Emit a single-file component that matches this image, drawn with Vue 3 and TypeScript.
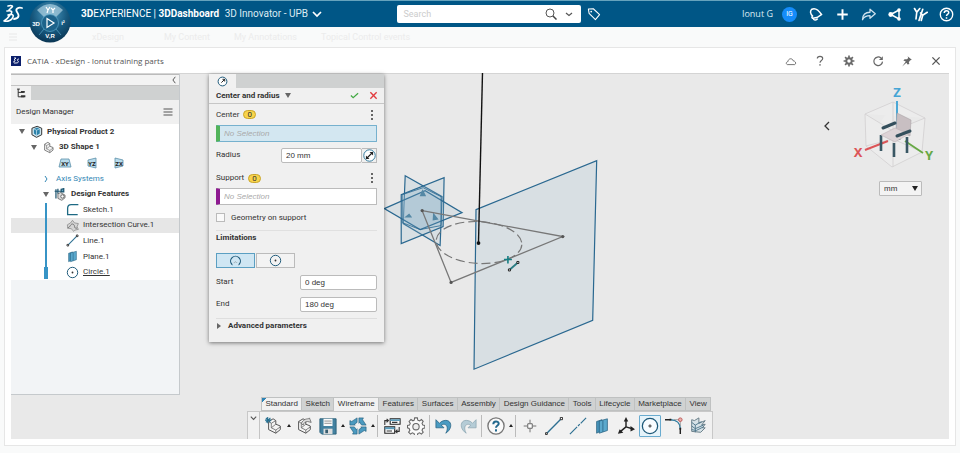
<script setup lang="ts">
import { ref } from 'vue'

interface TreeItem {
  label: string
  icon: string
  selected?: boolean
  active?: boolean
}

const shape = '<path d="M4 5l5-3 3 2v4l5 2v4l-5 4-8-4z" fill="#f4f4f4" stroke="#555" stroke-width="1.1"/><path d="M4 5l3 2v5l5 2.500 5-3.500M12 4L7 7M12 18v-3.500M12 8l-5 4" fill="none" stroke="#666" stroke-width=".9"/>'
const circle = '<circle cx="10" cy="10" r="8" fill="none" stroke="#1d5878" stroke-width="1.500"/><circle cx="10" cy="10" r="1.400" fill="#333"/>'
const line = '<path d="M3 17L17 3" stroke="#2d6f91" stroke-width="1.600"/><path d="M1.500 16h2.500v2.500H1.500zM16 1.500h2.500V4H16z" fill="#fff" stroke="#222" stroke-width="1.200"/>'
const plane = '<path d="M4 5l6-2v12l-6 3z" fill="#4794ba" stroke="#235e7d" stroke-width=".8"/><path d="M7 4.500L16 2v13l-9 3z" fill="#5ba9cd" stroke="#235e7d" stroke-width=".8"/><path d="M11 4v12.500" stroke="#235e7d" stroke-width=".8"/>'

const icons: Record<string, string> = {
  bell: '<path d="M5 3c4-2 9 1 13 7l-6 4-6 1c-1-1-1-2 0-3C3 9 2.500 5.500 5 3zM7 16c2 2 4 2 6-.5" fill="none" stroke="#fff" stroke-width="2"/>',
  plus: '<path d="M10 3v14M3 10h14" stroke="#fff" stroke-width="2.600"/>',
  share: '<path d="M12 3l7 6-7 6v-3.500c-5 0-8 1.500-10 5.500 0-7 4-10 10-10z" fill="none" stroke="#cfe2ee" stroke-width="1.700" stroke-linejoin="round"/>',
  network: '<path d="M16 4L5 10l11 6V4" fill="none" stroke="#fff" stroke-width="2"/><circle cx="5" cy="10" r="3.200" fill="#fff"/><circle cx="16" cy="4" r="2.400" fill="#fff"/><circle cx="16" cy="16" r="2.400" fill="#fff"/>',
  people: '<path d="M2 2l3 5 4-5M5 7l-1 9M13 3L8 18M10 8l3 3 6-4M13 11l-2 7" fill="none" stroke="#fff" stroke-width="2.200" stroke-linecap="round"/>',
  help: '<circle cx="10" cy="10" r="8.300" fill="none" stroke="#fff" stroke-width="1.800"/><path d="M7 8c0-4 6-4 6-.5 0 2-3 2-3 4.500M10 13.500v2" fill="none" stroke="#fff" stroke-width="2"/>',
  tag: '<path d="M2 3l7-.5 9 8.500-6 7-9-9z" fill="none" stroke="#fff" stroke-width="1.500" stroke-linejoin="round"/><circle cx="6" cy="6.500" r="1.300" fill="#fff"/>',
  cloud: '<path d="M4 16c-3-1-2-5 1-5 0-5 7-7 9-1 4 0 5 5 2 6z" fill="none" stroke="#666" stroke-width="1.500"/>',
  question: '<path d="M5.500 6c0-5 9-5 9 0 0 3.500-4.500 3-4.500 7M10 15v3" fill="none" stroke="#666" stroke-width="1.900"/>',
  gear: '<circle cx="10" cy="10" r="4.500" fill="none" stroke="#6a6a6a" stroke-width="3.200"/><path d="M10 1v4M10 15v4M1 10h4M15 10h4M3.500 3.500l3 3M13.500 13.500l3 3M3.500 16.500l3-3M13.500 6.500l3-3" stroke="#6a6a6a" stroke-width="2.800"/>',
  refresh: '<path d="M15 5A7.200 7.200 0 1 0 17.500 11" fill="none" stroke="#666" stroke-width="2"/><path d="M18 2v6.500h-6.500z" fill="#666"/>',
  pin: '<path d="M11 2l7 6-3 1-2 3 1 3-3 1-2-3-7 6 6-8-4-2 2-2h4l2-2z" fill="#666"/>',
  close: '<path d="M4 4l12 12M16 4L4 16" stroke="#555" stroke-width="2.200"/>',
  hierarchy: '<path d="M2 2h5M4 2v14h11M4 8h10" fill="none" stroke="#333" stroke-width="1.800"/><path d="M9 7h7M9 15h8" stroke="#333" stroke-width="3.400"/>',
  menu: '<path d="M1 4h18M1 10h18M1 16h18" stroke="#555" stroke-width="2"/>',
  product: '<path d="M3 5l8-3 7 3v10l-8 4-7-4z" fill="#cfe6f0" stroke="#222" stroke-width="1.400"/><path d="M6 6l5-2 4 2v7l-5 3-4-3z" fill="#2c82aa"/><path d="M6 6l4 2 5-2M10 8v8" stroke="#d6edf7" fill="none"/>',
  shape,
  features: '<path d="M3 2v14M1 5h12M6 1v8M11 2l4-1v5h-4z" fill="#71b7d6" stroke="#1d546e" stroke-width="1.900"/><path d="M6 9l4-2 7 4v4l-5 4-6-3z" fill="#ddd" stroke="#444"/><circle cx="13" cy="13" r="2.600" fill="#fff" stroke="#555" stroke-width="1.300"/>',
  sketch: '<path d="M19 2.500H8C4 2.500 2.500 5 2.500 8v10H18" fill="none" stroke="#1e6a84" stroke-width="2"/>',
  curve: '<path d="M2 9l5-3 3-4 3 4 6 1-2 5 2 4-5 1-2 2-4-4-5-1z" fill="#d4d4d4" stroke="#8a8a8a" stroke-width="1.200"/><path d="M2 14c5-1 5-8 9-6s0 7 6 6" fill="none" stroke="#666" stroke-width="1.300"/>',
  line,
  plane,
  circle,
  radius: '<circle cx="10" cy="10" r="8" fill="#fff" stroke="#1d5878" stroke-width="1.800"/><path d="M8 12l6-6M10 6h4v4" stroke="#222" stroke-width="1.800" fill="none"/>',
  diameter: '<circle cx="10" cy="10" r="8.800" fill="#fff" stroke="#2d789b" stroke-width="1.500"/><path d="M5 15L15 5" stroke="#222" stroke-width="1.700"/><path d="M10 4.500h5.500V10zM4.500 10v5.500H10z" fill="#222"/>',
  check: '<path d="M2 10l5 5L18 5" fill="none" stroke="#42a943" stroke-width="2.700"/>',
  cross: '<path d="M3 3l14 14M17 3L3 17" stroke="#e23c3f" stroke-width="3"/>',
  arc: '<path d="M4.500 16A7.500 7.500 0 1 1 15.500 16" fill="none" stroke="#1d5878" stroke-width="1.800"/><path d="M3 15l3 2M17 15l-3 2" stroke="#1d5878"/><path d="M8 14a2 2 0 0 1 4 0" fill="none" stroke="#555" stroke-dasharray="1 1"/>',
  newshape: shape + '<path d="M3 0v7M0 3.500h7M1 1l5 5M6 1L1 6" stroke="#246f91" stroke-width="1.200"/>',
  openshape: shape + '<path d="M7 7c2-4 5-5 8-5l1-1 2 5-4-1c-2 0-4 1-5 4z" fill="#ddd" stroke="#555" stroke-width=".8"/>',
  save: '<path d="M1 2h18v17H3l-2-2z" fill="#4381a0" stroke="#285d77"/><path d="M5 2h10v8H5z" fill="#fafafa"/><path d="M6 4.500h8M6 7h8" stroke="#888"/><path d="M5 13h10v6H5z" fill="#ddd"/><path d="M7 14h3v4H7z" fill="#375d70"/>',
  sync: '<g fill="#4b9ac0" stroke="#235e7d" stroke-width=".7"><path d="M1 9V4l2 1 6-4v5L6 8l1 1z"/><path d="M11 1h5l-1 2 4 6h-5l-2-3-1 1z"/><path d="M19 11v5l-2-1-6 4v-5l3-2-1-1z"/><path d="M9 19H4l1-2-4-6h5l2 3 1-1z"/></g>',
  swap: '<path d="M8 2h11v6H8zM2 11h11v7H2z" fill="#fff" stroke="#222" stroke-width="1.200"/><path d="M8 3.500h11M2 12.500h11" stroke="#5b9cbb" stroke-width="2"/><path d="M10 6h6M4 15.500h6M2 9V4h4M4 2l2 2-2 2M18 11v5h-4M16 14l-2 2 2 2" fill="none" stroke="#333" stroke-width="1.200"/>',
  cog: '<path d="M8.500 1h3l.5 2.500 2 .8 2-1.500 2 2-1.300 2.200.9 2 2.200.4v2.800l-2.200.6-.9 2 1.300 2-2 2.200-2-1.400-2 .8-.5 2.600h-3l-.6-2.600-2-.8-2 1.400-2.100-2.200 1.400-2-.8-2L.5 12V9.400l2.300-.4.8-2-1.300-2 2.100-2.200 2.200 1.400 1.400-.7z" fill="#fafafa" stroke="#666" stroke-width="1.200"/><circle cx="10" cy="10.800" r="3.500" fill="#eee" stroke="#666" stroke-width="1.200"/>',
  undo: '<path d="M1 3v9h9L7 9c5-3 9 2 5 9 9-6 6-16-2-14-3 .7-4 2-5 3z" fill="#4a9bc2" stroke="#235e7d" stroke-width=".8"/>',
  redo: '<path d="M19 3v9h-9l3-3C8 6 4 11 8 18-1 12 2 2 10 4c3 .7 4 2 5 3z" fill="#b5ccd6" stroke="#8aa4b0" stroke-width=".8"/>',
  assist: '<circle cx="10" cy="10" r="9" fill="#fafafa" stroke="#777" stroke-width="1.500"/><path d="M7 8c0-4 6-4 6-.5 0 2-3 2-3 4.500M10 13.500V16" fill="none" stroke="#22688e" stroke-width="2.200"/>',
  point: '<path d="M3 10h4M13 10h4M10 3v4M10 13v4" stroke="#666"/><path d="M7.500 7.500h5v5h-5z" fill="#fff" stroke="#555"/>',
  bigline: '<path d="M1.500 18.500L18 2" stroke="#2d6f91" stroke-width="1.500"/><path d="M.5 17.500h2v2h-2zM17 .5h2.500V3H17z" fill="#fff" stroke="#222"/>',
  axisline: '<path d="M1 19l8-8M10 10l2-2M13 7l6-6" stroke="#2d6f91" stroke-width="1.300"/>',
  axes: '<path d="M10 11V3M10 11l7 2M10 11l-6 5" stroke="#222" stroke-width="1.600"/><path d="M10 0L7.500 5h5zM20 13.500l-5-3.500v6zM1 18.500l2-5 4 4z" fill="#222"/>',
  circletool: '<circle cx="10" cy="10" r="8.500" fill="#f8fcff" stroke="#1d5878" stroke-width="1.400"/><path d="M9 9h2v2H9z" fill="#fff" stroke="#333"/>',
  corner: '<path d="M0 3h6M17 13v6" stroke="#222" stroke-width="1.600"/><path d="M6 3c7 0 11 4 11 10" stroke="#2c7a9f" stroke-width="1.500" fill="none"/><path d="M10 3h7v7" stroke="#999" fill="none"/><path d="M5 2h2v2H5zM16 12h2v2h-2z" fill="#222"/><circle cx="17" cy="3" r="2" fill="#eeb1aa" stroke="#b55"/>',
  surface: '<path d="M3 3l3 1 5-3v6l7-3-4 5 4-1-3 4h3l-5 5-10-1z" fill="#d7e2e7" stroke="#607681"/><path d="M3 6l4 3 7-4M3 10l4 3 9-4M3 14l5 1 8-4M7 9v8" fill="none" stroke="#487388"/>',
}

const headerTools = ['bell', 'plus', 'share', 'network', 'people', 'help']
const windowTools = ['cloud', 'question', 'gear', 'refresh', 'pin', 'close']
const dashboardTabs = ['xDesign', 'My Content', 'My Annotations', 'Topical Control events']

const tree: TreeItem[] = [
  { label: 'Sketch.1', icon: 'sketch' },
  { label: 'Intersection Curve.1', icon: 'curve', selected: true },
  { label: 'Line.1', icon: 'line' },
  { label: 'Plane.1', icon: 'plane' },
  { label: 'Circle.1', icon: 'circle', active: true },
]

const sections = ['Standard', 'Sketch', 'Wireframe', 'Features', 'Surfaces', 'Assembly', 'Design Guidance', 'Tools', 'Lifecycle', 'Marketplace', 'View']
const section = ref('Wireframe')

const tools = [
  { icon: 'newshape', menu: true },
  { icon: 'openshape' },
  { icon: 'save', menu: true },
  { icon: 'sync', menu: true, end: true },
  { icon: 'swap' },
  { icon: 'cog', end: true },
  { icon: 'undo' },
  { icon: 'redo', end: true },
  { icon: 'assist', menu: true, end: true },
  { icon: 'point' },
  { icon: 'bigline' },
  { icon: 'axisline' },
  { icon: 'plane' },
  { icon: 'axes' },
  { icon: 'circletool', on: true },
  { icon: 'corner' },
  { icon: 'surface' },
]

const radius = ref('20 mm')
const start = ref('0 deg')
const end = ref('180 deg')
const onSupport = ref(false)
const mode = ref('arc')
const unit = ref('mm')
</script>

<template>
  <div class="page">
    <header class="topbar">
      <div class="brand">
        <svg class="ds" viewBox="0 0 20 20" aria-label="3DS">
          <path d="M5 2c4-1 6 0 3 2L6 6M4 7c5-1 6 1 3 4-2 3-4 5-6 6 4 1 8-1 9-4s-2-3-5-2" fill="none" stroke="#fff" stroke-width="1.600" stroke-linecap="round" stroke-linejoin="round" />
          <path d="M19 4c-4-1-7 1-5 4s3 6-3 7" fill="none" stroke="#fff" stroke-width="1.800" stroke-linecap="round" />
        </svg>
        <button class="compass" aria-label="Compass">
          <svg viewBox="0 0 42 42">
            <defs>
              <radialGradient id="ball" cx=".5" cy=".3" r=".7">
                <stop offset="0" stop-color="#4e9cc3" /><stop offset=".6" stop-color="#16587e" /><stop offset="1" stop-color="#0b3654" />
              </radialGradient>
            </defs>
            <circle cx="21" cy="21" r="20.500" fill="url(#ball)" />
            <path d="M8 9Q21-3 34 9L27 16Q21 11 15 16z" fill="#a7cbdc" opacity=".75" />
            <circle cx="21" cy="22" r="8.500" fill="#1d638b" stroke="#5ba6c9" stroke-width=".7" />
            <path d="M18 17.500l7 4.500-7 4.500z" fill="none" stroke="#fff" stroke-width="1.200" />
            <path d="M15 28l-5 6M27 28l5 6" stroke="#5ba6c9" stroke-width=".7" />
            <g fill="#fff" font-family="Liberation Sans" font-size="6" font-weight="700" text-anchor="middle">
              <text x="7" y="25">3D</text><text x="21" y="37">V,R</text><text x="34" y="24">i²</text>
            </g>
            <path d="M17 6l2 3 2-3M19 9l-1 3M22 7l2 2 2-2M24 9v3" fill="none" stroke="#fff" stroke-width="1.200" />
          </svg>
        </button>
        <h1><b>3D</b>EXPERIENCE <span class="bar">|</span> <b>3DDashboard</b> <span class="space">3D Innovator - UPB</span></h1>
        <svg class="chev" viewBox="0 0 10 10"><path d="M1 3l4 4 4-4" fill="none" stroke="#fff" stroke-width="1.700" /></svg>
      </div>
      <form class="search" @submit.prevent>
        <input type="text" placeholder="Search" aria-label="Search" />
        <svg class="lens" viewBox="0 0 12 12"><circle cx="5" cy="5" r="4" fill="none" stroke="#555" /><path d="M8 8l3.500 3.500" stroke="#444" stroke-width="1.500" /></svg>
        <svg class="chev" viewBox="0 0 10 10"><path d="M2 4l3 2.500L8 4" fill="none" stroke="#555" stroke-width="1.200" /></svg>
      </form>
      <div class="account">
        <button class="plain tag" aria-label="Tags"><svg viewBox="0 0 20 20" v-html="icons.tag" /></button>
        <span class="user">Ionut G</span>
        <span class="avatar">IG</span>
        <button v-for="t in headerTools" :key="t" class="plain head-tool" :aria-label="t"><svg viewBox="0 0 20 20" v-html="icons[t]" /></button>
      </div>
    </header>

    <nav class="dash-tabs">
      <svg viewBox="0 0 10 10"><path d="M1 2h8M1 5h8M1 8h8" stroke="#e8e8e8" /></svg>
      <a v-for="t in dashboardTabs" :key="t" href="#">{{ t }}</a>
    </nav>

    <main class="widget">
      <div class="titlebar">
        <svg class="app" viewBox="0 0 10 10"><path d="M0 0h10v10H0z" fill="#0b1f6b" /><path d="M3 2h2L3 4c2 0 1 2-1 2M3 7h2M8 3c-2 0-2 1-1 2s0 2-2 2" fill="none" stroke="#fff" stroke-width=".9" /></svg>
        <h2>CATIA - xDesign - Ionut training parts</h2>
        <button v-for="t in windowTools" :key="t" class="plain win-tool" :aria-label="t"><svg viewBox="0 0 20 20" v-html="icons[t]" /></button>
      </div>

      <div class="viewport">
        <svg class="scene" viewBox="11 73 938 366">
          <g fill="#9dbccd" fill-opacity=".22" stroke="#2a6890" stroke-width="1.200">
            <path d="M476 210L597 161 593 321 474 370z" />
            <path d="M405 176L442 197 440 246 403 224z" />
            <path d="M444 178L443 227 401 244 401 195z" />
            <path d="M384 209L425 191 462 213 420 230z" />
            <path d="M402 195L423 188 441 197 441 226 420 230 402 223z" fill="#8db6cb" fill-opacity=".2" stroke-width=".8" />
          </g>
          <path d="M422.500 189.500l3.500 7h-6.500zM404 218l5-4 3 4zM433 213l5.500 7-6 1z" fill="#5488a5" />
          <ellipse cx="479" cy="243" rx="43" ry="21" transform="rotate(3 479 243)" fill="none" stroke="#777" stroke-width="1.200" stroke-dasharray="9 4" />
          <path d="M422 211L563 237 451 283z" fill="none" stroke="#777" stroke-width="1.300" />
          <g fill="#555"><circle cx="422" cy="211" r="1.600" /><circle cx="563" cy="237" r="1.600" /><circle cx="451" cy="283" r="1.600" /></g>
          <path d="M482.500 73L478.500 243" stroke="#111" stroke-width="1.400" /><circle cx="478.500" cy="243.500" r="1.900" fill="#111" />
          <path d="M504 260h8M508 256.500v7.500" stroke="#157f84" stroke-width="1.600" />
          <path d="M510 270l8-7" stroke="#297c83" stroke-width="1.800" /><path d="M508.500 269.500h2v2h-2zM517 262h2v2h-2z" fill="#fff" stroke="#222" />
        </svg>

        <aside class="manager">
          <div class="collapse"><button class="plain" aria-label="Collapse panel"><svg viewBox="0 0 10 10"><path d="M6 1L3 5l3 4" fill="none" stroke="#333" /></svg></button></div>
          <div class="strip"><button class="plain strip-tab" aria-label="Tree"><svg viewBox="0 0 20 20" v-html="icons.hierarchy" /></button></div>
          <div class="manager-head"><span>Design Manager</span><button class="plain" aria-label="Menu"><svg viewBox="0 0 20 20" v-html="icons.menu" /></button></div>
          <div class="tree-wrap">
            <ul class="tree">
              <li class="d0"><i class="down" /><svg viewBox="0 0 20 20" v-html="icons.product" /><b>Physical Product 2</b></li>
              <li class="d1"><i class="down" /><svg viewBox="0 0 20 20" v-html="icons.shape" /><b>3D Shape 1</b></li>
              <li class="planes">
                <svg viewBox="0 0 14 12"><path d="M3 2h8l2 8H1z" fill="#b9dcec" stroke="#5c8fa9" stroke-width=".8" /><text x="7" y="8.500">XY</text></svg>
                <svg viewBox="0 0 14 12"><path d="M3 3l8-2v10l-8-2z" fill="#b9dcec" stroke="#5c8fa9" stroke-width=".8" /><text x="7" y="8.500">YZ</text></svg>
                <svg viewBox="0 0 14 12"><path d="M3 1l8 2v6l-8 2z" fill="#b9dcec" stroke="#5c8fa9" stroke-width=".8" /><text x="7" y="8.500">ZX</text></svg>
              </li>
              <li class="d2 axis"><svg class="tiny" viewBox="0 0 6 8"><path d="M2 1l2 3-2 3" fill="none" stroke="#3387b5" /></svg><span>Axis Systems</span></li>
              <li class="d2"><i class="down" /><svg viewBox="0 0 20 20" v-html="icons.features" /><b>Design Features</b></li>
              <li v-for="n in tree" :key="n.label" class="d3" :class="{ selected: n.selected, active: n.active }">
                <svg viewBox="0 0 20 20" v-html="icons[n.icon]" /><span>{{ n.label }}</span>
              </li>
            </ul>
            <div class="timeline" />
          </div>
        </aside>

        <section class="dialog">
          <div class="strip"><button class="plain strip-tab" aria-label="Circle"><svg viewBox="0 0 20 20" v-html="icons.radius" /></button></div>
          <div class="dialog-head">
            <b>Center and radius</b><i class="down" />
            <button class="plain ok" aria-label="OK"><svg viewBox="0 0 20 20" v-html="icons.check" /></button>
            <button class="plain" aria-label="Cancel"><svg viewBox="0 0 20 20" v-html="icons.cross" /></button>
          </div>
          <div class="fields">
            <div class="caption"><label for="center">Center</label><span class="count">0</span><button class="plain dots" aria-label="Center options"><i /><i /><i /></button></div>
            <input id="center" class="pick green" type="text" placeholder="No Selection" />
            <div class="row radius"><label for="radius">Radius</label><div class="combo"><input id="radius" v-model="radius" type="text" /><button class="plain" aria-label="Diameter"><svg viewBox="0 0 20 20" v-html="icons.diameter" /></button></div></div>
            <div class="caption"><label for="support">Support</label><span class="count">0</span><button class="plain dots" aria-label="Support options"><i /><i /><i /></button></div>
            <input id="support" class="pick purple" type="text" placeholder="No Selection" />
            <div class="check"><input id="geo" v-model="onSupport" type="checkbox" /><label for="geo">Geometry on support</label></div>
            <h3>Limitations</h3>
            <div class="modes">
              <button :class="{ on: mode === 'arc' }" aria-label="Arc" @click="mode = 'arc'"><svg viewBox="0 0 20 20" v-html="icons.arc" /></button>
              <button :class="{ on: mode === 'full' }" aria-label="Full circle" @click="mode = 'full'"><svg viewBox="0 0 20 20" v-html="icons.circle" /></button>
            </div>
            <div class="row angle"><label for="start">Start</label><input id="start" v-model="start" type="text" /></div>
            <div class="row angle"><label for="end">End</label><input id="end" v-model="end" type="text" /></div>
            <button class="plain advanced"><i class="right" />Advanced parameters</button>
          </div>
        </section>

        <div class="orient">
          <button class="plain back" aria-label="Show panel"><svg viewBox="0 0 10 10"><path d="M7 1L3 5l4 4" fill="none" stroke="#333" stroke-width="1.300" /></svg></button>
          <div class="orient-main">
            <svg class="cube" viewBox="853 78 84 90">
              <path d="M865 113L893 101 925 117 922 151 892 166 866 145zM865 113L893 130 925 117M893 130V166M893 101V138L866 145M893 138L922 151" fill="#fff" fill-opacity=".15" stroke="#d2cfd0" stroke-width=".8" />
              <path d="M897 136V100" stroke="#45a5d5" stroke-width="1.900" />
              <path d="M888 140L865 149" stroke="#dc5558" stroke-width="1.900" />
              <path d="M905 140L923 152" stroke="#66a844" stroke-width="1.900" />
              <path d="M881 134v16M894 142v14M907 136v16M899 133v6" stroke="#395764" stroke-width="2.600" />
              <path d="M897 112l14 7-1 16-14-6z" fill="#c8bfc2" stroke="#aaa2a6" stroke-width=".6" />
              <path d="M881 134l14-7 14 6-14 8z" fill="#ddd3d6" stroke="#bdb3b7" stroke-width=".6" />
              <path d="M883 127l12-5M897 135l13-5" stroke="#344f5c" stroke-width="3" stroke-linecap="round" />
              <g font-family="Noto Sans" font-size="13" font-weight="700" text-anchor="middle"><text x="897" y="96" fill="#45a5d5">Z</text><text x="858" y="156" fill="#dc5558">X</text><text x="929" y="159" fill="#66a844">Y</text></g>
            </svg>
            <div class="unit"><select v-model="unit" aria-label="Unit"><option>mm</option><option>cm</option></select><i class="down" /></div>
          </div>
        </div>

        <div class="actionbar">
          <div class="sections">
            <button v-for="s in sections" :key="s" :class="{ on: s === section, first: s === 'Standard' }" @click="section = s">{{ s }}</button>
          </div>
          <div class="tools">
            <button class="plain fold" aria-label="Fold toolbar"><svg viewBox="0 0 10 10"><path d="M2 3l3 3 3-3" fill="none" stroke="#555" stroke-width="1.200" /></svg></button>
            <div class="toolrow">
              <template v-for="t in tools" :key="t.icon">
                <button class="plain tool" :class="{ on: t.on }" :aria-label="t.icon"><svg viewBox="0 0 20 20" v-html="icons[t.icon]" /></button>
                <i v-if="t.menu" class="up" />
                <span v-if="t.end" class="sep" />
              </template>
            </div>
          </div>
        </div>
      </div>
    </main>
  </div>
</template>

<style>
body { margin: 0; background: #f9fafa; }
</style>

<style scoped>
* { box-sizing: border-box; }
.page { display: flex; flex-direction: column; min-height: 100vh; padding-bottom: 7px; font-family: Roboto, "Liberation Sans", sans-serif; font-size: 8px; line-height: 10px; color: #333; }
button, input, select { font: inherit; color: inherit; margin: 0; min-width: 0; }
button { cursor: pointer; }
svg { display: block; flex: none; }
i { display: block; flex: none; }
.plain { padding: 0; border: 0; background: none; display: flex; align-items: center; justify-content: center; }

.topbar { display: grid; grid-template-columns: 21fr 184px 20fr; align-items: center; height: 27px; background: #005686; border-top: 1px solid #66a3bd; color: #fff; }
.brand { display: flex; align-items: center; height: 26px; padding-left: 3px; }
.ds { width: 20px; height: 20px; }
.compass { align-self: flex-start; width: 42px; height: 42px; margin: 0 10px 0 6px; padding: 0; border: 0; border-radius: 50%; background: none; position: relative; z-index: 2; }
.compass svg { width: 42px; height: 42px; }
h1 { margin: 0; font-size: 10px; line-height: 14px; font-weight: 400; white-space: nowrap; }
.space { margin-left: 3px; color: #dcebf3; }
.chev { width: 10px; height: 10px; margin-left: 4px; }
.search { display: flex; align-items: center; height: 18px; padding: 0 7px 0 6px; background: #fff; border-radius: 2px; }
.search input { flex: 1; border: 0; outline: 0; padding: 0; background: none; font-size: 9px; color: #555; }
.search input::placeholder { color: #ccc; }
.lens { width: 12px; height: 12px; margin-right: 3px; }
.account { display: flex; align-items: center; padding-right: 6px; }
.tag { width: 14px; margin-left: 6px; }
.tag svg { width: 14px; height: 14px; }
.user { margin-left: auto; color: #dcebf3; font: 9px/14px "Open Sans", sans-serif; }
.avatar { width: 15px; height: 15px; margin: 0 11px 0 9px; border-radius: 50%; background: #158cfa; font-size: 7px; line-height: 15px; text-align: center; }
.head-tool { width: 15px; margin-left: 11px; }
.avatar + .head-tool { margin: 0 1px 0 0; }
.head-tool svg { width: 15px; height: 15px; }

.dash-tabs { display: flex; align-items: center; gap: 24px; height: 20px; padding-left: 8px; }
.dash-tabs svg { width: 10px; height: 10px; margin-right: 50px; }
.dash-tabs a { color: #ececec; text-decoration: none; font-size: 9px; }
.dash-tabs a:first-of-type { margin-right: 16px; }

.widget { flex: 1; display: flex; flex-direction: column; margin: 0 4px; border: 1px solid #e6e6e6; background: #fff; }
.titlebar { display: flex; align-items: center; height: 25px; padding: 0 13px 0 6px; }
.app { width: 10px; height: 10px; }
h2 { flex: 1; margin: 0 0 0 6px; font: 400 8px/12px "Open Sans", sans-serif; color: #555; }
.win-tool { width: 12px; margin-left: 17px; }
.win-tool svg { width: 12px; height: 12px; }

.viewport { flex: 1; display: flex; align-items: flex-start; position: relative; margin: 0 6px 6px; background: #e9e9e9; border-top: 1px solid #d4d4d4; min-height: 350px; }
.scene { position: absolute; inset: -1px 0 0; width: 100%; height: 100%; }

.manager { position: relative; display: flex; flex-direction: column; width: 169px; align-self: stretch; margin-bottom: 44px; background: #f2f4f6; border-right: 1px solid #c5c9cc; border-bottom: 1px solid #c5c9cc; }
.collapse { display: flex; justify-content: flex-end; height: 12px; background: #f3f3f3; border-top: 1px solid #bbb; border-bottom: 1px solid #c4c4c4; }
.collapse svg { width: 9px; height: 8px; }
.strip { display: flex; background: #cfd1d1; height: 14px; }
.strip-tab { width: 20px; background: #f1f1f1; }
.strip-tab svg { width: 11px; height: 11px; }
.manager-head { display: flex; align-items: center; justify-content: space-between; height: 24px; padding: 0 6px 0 5px; background: #f0f0f0; }
.manager-head svg { width: 10px; height: 10px; }
.tree-wrap { position: relative; background: #fff; }
.tree { display: grid; grid-template-rows: repeat(10, 1fr); height: 156px; margin: 0; padding: 0; list-style: none; }
.tree li { display: flex; align-items: center; white-space: nowrap; }
.tree li > svg { width: 13px; height: 13px; margin-right: 4px; }
.down { width: 0; height: 0; border: 3px solid transparent; border-top: 5px solid #666; border-bottom: 0; }
.tree .down { margin-right: 5px; }
.d0 { padding-left: 8px; }
.d1 { padding-left: 20px; }
.d2 { padding-left: 32px; }
.d3 { padding-left: 55px; }
.tree .planes { padding-left: 47px; gap: 13px; }
.tree .planes svg { width: 14px; height: 12px; margin: 0; }
.planes text { font-size: 6px; font-weight: 700; text-anchor: middle; fill: #222; }
.axis { color: #3387b5; }
.tree .axis .tiny { width: 6px; height: 8px; margin-right: 7px; }
.selected { background: #e6e6e6; }
.active span { text-decoration: underline; }
.timeline { position: absolute; left: 33px; top: 79px; bottom: 1px; width: 4px; background: linear-gradient(#3794c6, #3794c6) bottom / 4px 12px no-repeat, linear-gradient(#3794c6, #3794c6) center / 2px 100% no-repeat; }

.dialog { position: relative; width: 175px; margin-left: 29px; background: #f0f0f0; box-shadow: 0 1px 4px rgba(0, 0, 0, .5); }
.dialog .strip-tab { width: 27px; }
.dialog-head { display: flex; align-items: center; height: 16px; padding: 0 6px 0 7px; border-bottom: 1px solid #c6c6c6; }
.dialog-head .down { margin-left: 5px; }
.dialog-head svg { width: 9px; height: 9px; }
.ok { margin: 0 10px 0 auto; }
.fields { display: flex; flex-direction: column; padding: 0 7px; }
.caption { display: flex; align-items: center; height: 21px; }
.count { height: 9px; margin-left: 4px; padding: 0 3px; background: #f8d44b; border: 1px solid #c9a52c; border-radius: 5px; line-height: 7px; }
.dots { flex-direction: column; gap: 2px; width: 10px; margin-left: auto; }
.dots i { width: 2px; height: 2px; background: #666; }
.fields input, .unit select { font-family: "Liberation Sans", Arial, sans-serif; }
.pick { width: 100%; height: 17px; padding: 0 4px; border: 1px solid #bbb; border-radius: 1px; background: #fff; outline: 0; }
.pick::placeholder { color: #aaa; font-style: italic; }
.green { border-color: #76b1ce; border-left: 4px solid #52b35a; background: #d3e7f1; }
.purple { border-left: 4px solid #8e1a91; }
.row { display: flex; align-items: center; justify-content: space-between; height: 22px; }
.row input { height: 15px; padding: 0 4px; border: 1px solid #bbb; border-radius: 2px; background: #fff; outline: 0; }
.radius { height: 26px; }
.combo { display: flex; width: 96px; }
.combo input { flex: 1; }
.combo button { width: 15px; border: 1px solid #bbb; border-left: 0; }
.combo svg { width: 13px; height: 13px; }
.row + .caption { height: 20px; }
.check { display: flex; align-items: center; gap: 6px; height: 26px; border-bottom: 1px solid #e0e0e0; }
.check input { appearance: none; width: 9px; height: 9px; border: 1px solid #bbb; background: #fafafa; }
h3 { margin: 0 0 8px; font-size: 8px; line-height: 14px; }
.modes { display: flex; gap: 1px; margin-bottom: 3px; }
.modes button { display: flex; align-items: center; justify-content: center; width: 39px; height: 15px; padding: 0; border: 1px solid #bbb; background: #f3f3f3; }
.modes .on { border-color: #5b9fc2; background: #cfe6f3; }
.modes svg { width: 13px; height: 13px; }
.angle input { width: 77px; }
.advanced { justify-content: flex-start; height: 24px; padding: 0 0 10px; margin-top: 3px; border-top: 1px solid #dedede; font-weight: 700; }
.right { width: 0; height: 0; margin: 0 7px 0 1px; border: 3px solid transparent; border-left: 4px solid #666; border-right: 0; }

.orient { position: relative; display: flex; align-items: flex-start; margin: 5px 12px 0 auto; }
.back { margin: 42px 21px 0 0; }
.back svg { width: 10px; height: 10px; }
.orient-main { display: flex; flex-direction: column; }
.cube { width: 84px; height: 90px; }
.unit { position: relative; align-self: flex-end; width: 43px; margin: 12px 15px 0 0; }
.unit select { appearance: none; display: block; width: 100%; height: 15px; padding: 0 4px; border: 1px solid #bbb; border-radius: 1px; background: #f3f3f3; }
.unit .down { position: absolute; right: 4px; top: 5px; pointer-events: none; border-top-color: #222; }

.actionbar { position: absolute; left: 0; right: 0; bottom: 0; display: flex; flex-direction: column; width: fit-content; margin: 0 auto; }
.sections { display: flex; margin: 0 2px 0 14px; font-family: "Liberation Sans", Arial, sans-serif; }
.sections button { flex: 1 0 auto; height: 14px; padding: 0 3px; border: 1px solid #bfc1c1; border-left-width: 0; background: #d0d2d2; white-space: nowrap; }
.sections .on, .sections .first { background: #f1f1f1; }
.sections .on { border-bottom-color: #f1f1f1; }
.sections .first { border-left-width: 1px; background: linear-gradient(135deg, #2d83b5 3px, #f1f1f1 3px); }
.tools { display: flex; background: #f1f1f1; border: 1px solid #c8c8c8; border-bottom: 0; height: 28px; }
.fold { align-items: flex-start; width: 12px; padding-top: 2px; border-right: 1px solid #c4c4c4; }
.fold svg { width: 9px; height: 9px; }
.toolrow { display: flex; align-items: center; padding: 0 2px; }
.tool { width: 24px; height: 22px; }
.tool svg { width: 18px; height: 18px; }
.tool.on { width: 22px; margin: 0 1px; border: 1px solid #69abcf; background: #e5f3fa; border-radius: 1px; }
.up { width: 0; height: 0; margin: 0 1px; border: 2px solid transparent; border-bottom: 3px solid #222; border-top: 0; }
.sep { width: 1px; height: 22px; margin: 0 2px 0 1px; background: #bbb; }
</style>
